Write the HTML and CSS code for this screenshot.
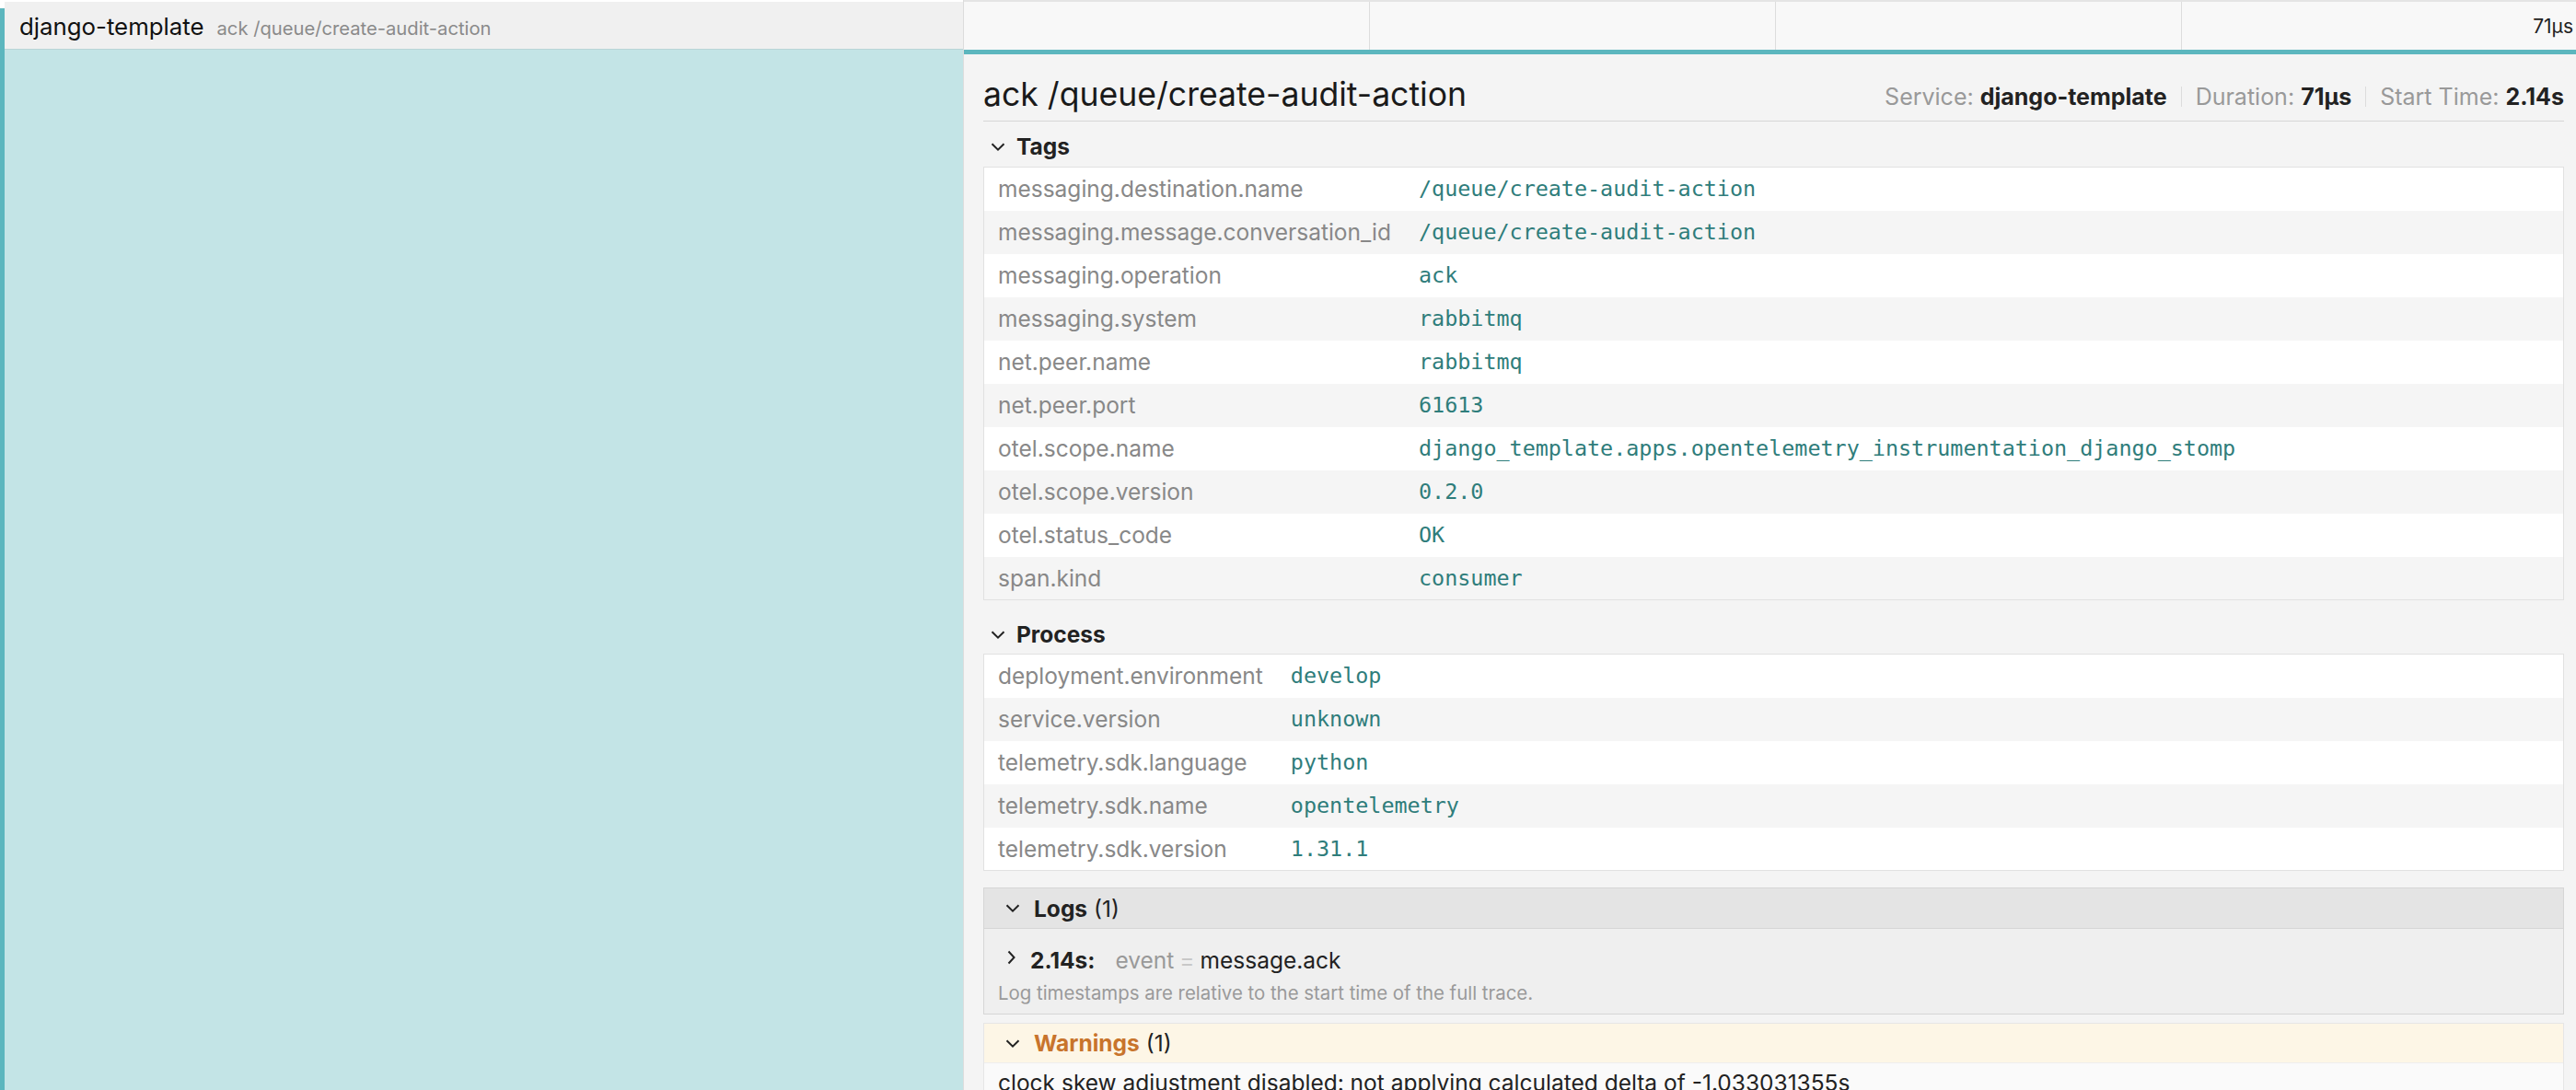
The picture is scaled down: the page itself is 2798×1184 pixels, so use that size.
FILE: index.html
```html
<!DOCTYPE html>
<html lang="en">
<head>
<meta charset="utf-8">
<title>ack /queue/create-audit-action</title>
<link rel="stylesheet" href="styles.css">
</head>
<body>
<div class="page">
  <div class="left">
    <div class="strip"></div>
    <div class="left-main">
      <div class="left-head">
        <span class="svc">django-template</span>
        <span class="op">ack /queue/create-audit-action</span>
      </div>
      <div class="left-body"></div>
    </div>
  </div>
  <div class="right">
    <div class="ticks">
      <div class="tick"></div>
      <div class="tick"></div>
      <div class="tick"></div>
      <div class="tick last"><span>71µs</span></div>
    </div>
    <div class="bar"></div>
    <div class="detail">
      <div class="title-row">
        <h1 class="title">ack /queue/create-audit-action</h1>
        <div class="meta">
          <span>Service: <b>django-template</b></span>
          <span class="sep"></span>
          <span>Duration: <b>71µs</b></span>
          <span class="sep"></span>
          <span>Start Time: <b>2.14s</b></span>
        </div>
      </div>

      <div class="sec-head">
        <svg class="chev" viewBox="0 0 16 9"><path d="M1.5 1.2 L8 7.6 L14.5 1.2"/></svg>
        <span>Tags</span>
      </div>
      <table class="kv">
        <tr><td class="k">messaging.destination.name</td><td class="v">/queue/create-audit-action</td></tr>
        <tr><td class="k">messaging.message.conversation_id</td><td class="v">/queue/create-audit-action</td></tr>
        <tr><td class="k">messaging.operation</td><td class="v">ack</td></tr>
        <tr><td class="k">messaging.system</td><td class="v">rabbitmq</td></tr>
        <tr><td class="k">net.peer.name</td><td class="v">rabbitmq</td></tr>
        <tr><td class="k">net.peer.port</td><td class="v">61613</td></tr>
        <tr><td class="k">otel.scope.name</td><td class="v">django_template.apps.opentelemetry_instrumentation_django_stomp</td></tr>
        <tr><td class="k">otel.scope.version</td><td class="v">0.2.0</td></tr>
        <tr><td class="k">otel.status_code</td><td class="v">OK</td></tr>
        <tr><td class="k">span.kind</td><td class="v">consumer</td></tr>
      </table>

      <div class="sec-head process">
        <svg class="chev" viewBox="0 0 16 9"><path d="M1.5 1.2 L8 7.6 L14.5 1.2"/></svg>
        <span>Process</span>
      </div>
      <table class="kv">
        <tr><td class="k">deployment.environment</td><td class="v">develop</td></tr>
        <tr><td class="k">service.version</td><td class="v">unknown</td></tr>
        <tr><td class="k">telemetry.sdk.language</td><td class="v">python</td></tr>
        <tr><td class="k">telemetry.sdk.name</td><td class="v">opentelemetry</td></tr>
        <tr><td class="k">telemetry.sdk.version</td><td class="v">1.31.1</td></tr>
      </table>

      <div class="box logs">
        <div class="box-head">
          <svg class="chev" viewBox="0 0 16 9"><path d="M1.5 1.2 L8 7.6 L14.5 1.2"/></svg>
          <b>Logs</b><span class="count">(1)</span>
        </div>
        <div class="log-body">
          <div class="log-row">
            <svg class="chev-r" viewBox="0 0 9 16"><path d="M1.5 1.5 L7.5 8 L1.5 14.5"/></svg>
            <span class="ts">2.14s:</span>
            <span class="ek">event</span><span class="eq">=</span><span class="ev">message.ack</span>
          </div>
          <div class="note">Log timestamps are relative to the start time of the full trace.</div>
        </div>
      </div>

      <div class="box warn">
        <div class="box-head">
          <svg class="chev" viewBox="0 0 16 9"><path d="M1.5 1.2 L8 7.6 L14.5 1.2"/></svg>
          <b class="warn-title">Warnings</b><span class="count">(1)</span>
        </div>
        <div class="warn-body">clock skew adjustment disabled: not applying calculated delta of -1.033031355s</div>
      </div>
    </div>
  </div>
</div>
</body>
</html>
```

FILE: styles.css
```css
* { box-sizing: border-box; margin: 0; padding: 0; }
html, body { width: 2798px; height: 1184px; overflow: hidden; background: #fff; }
body { font-family: Inter, "Liberation Sans", sans-serif; color: #222; }

.page { display: flex; height: 1184px; }

/* left span-name column */
.left { width: 1046px; flex: none; display: flex; background: #fff; }
.strip { width: 5px; flex: none; margin-top: 9px; background: #5cb6be; }
.left-main { flex: 1; display: flex; flex-direction: column; }
.left-head {
  margin-top: 2px; height: 52px; flex: none;
  display: flex; align-items: baseline; padding: 12px 0 0 16px;
  background: #f0f0f0; border-bottom: 1px solid #b9d5d7;
}
.svc { font-size: 25.8px; line-height: 30px; color: #111; }
.op { font-size: 20.2px; color: #8a8a8a; margin-left: 14px; }
.left-body { flex: 1; background: #c3e4e6; }

/* right detail column */
.right { flex: 1; display: flex; flex-direction: column; background: #f4f4f4; border-left: 1px solid #dcdcdc; min-width: 0; }
.ticks {
  height: 54px; flex: none; display: grid; grid-template-columns: 440px 441px 441px 1fr;
  background: #f8f8f8; border-top: 2px solid #e4e4e4;
}
.tick { border-left: 1px solid #dddddd; }
.tick:first-child { border-left: none; }
.tick.last { display: flex; align-items: center; justify-content: flex-end; padding-right: 3px; font-size: 21px; color: #222; }
.bar { height: 5px; flex: none; background: #5cb6be; }

.detail { flex: 1; padding: 0 13px 0 21px; }

.title-row {
  display: flex; align-items: center; justify-content: space-between;
  padding: 22px 0 6px; border-bottom: 1px solid #d6d6d6;
}
.title { font-size: 35.6px; font-weight: 400; line-height: 44px; color: #1a1a1a; }
.meta { display: flex; align-items: center; font-size: 25px; line-height: 30px; color: #999; margin-top: 4px; }
.meta b { color: #222; font-weight: 700; }
.sep { width: 1px; height: 22px; background: #dcdcdc; margin: 0 15px; }

.sec-head {
  display: flex; align-items: center;
  padding: 12px 0 7px 8px; line-height: 30px;
  font-size: 24.5px; font-weight: 700; color: #222;
}
.sec-head.process { padding-top: 22px; padding-bottom: 6px; }
.chev { width: 16px; height: 9px; flex: none; margin-right: 12px; fill: none; stroke: #222; stroke-width: 2; }

.kv { width: 100%; border-collapse: collapse; border: 1px solid #e1e1e1; background: #fff; }
.kv td { height: 47px; padding: 0 15px; white-space: nowrap; vertical-align: middle; }
.kv tr:nth-child(even) { background: #f5f5f5; }
.k { width: 1px; font-size: 24.5px; color: #888; }
.v { font-family: "DejaVu Sans Mono", "Liberation Mono", monospace; font-size: 23.4px; color: #2f7d7b; }

.box { margin-top: 18px; border: 1px solid #d6d6d6; background: #efefef; }
.box-head {
  height: 44px; display: flex; align-items: center; padding-left: 23px;
  background: #e4e4e4; border-bottom: 1px solid #d6d6d6;
  font-size: 24.5px; line-height: 30px; color: #222;
}
.box-head .chev { margin-right: 15px; }
.box-head b { font-weight: 700; }
.count { margin-left: 7px; }

.log-body { padding: 19px 0 8px 15px; }
.log-row { display: flex; align-items: center; padding-left: 10px; font-size: 24.5px; line-height: 30px; }
.chev-r { width: 9px; height: 16px; flex: none; margin-right: 16px; margin-top: -6px; fill: none; stroke: #222; stroke-width: 2; }
.ts { font-weight: 700; color: #222; margin-right: 22px; }
.ek { color: #999; }
.eq { color: #c8c8c8; margin: 0 6px; }
.ev { color: #222; }
.note { margin-top: 7px; font-size: 20.4px; line-height: 28px; color: #9a9a9a; }

.warn { margin-top: 9px; border-color: #e6e6e6; background: #fafafa; }
.warn .box-head { height: 43px; background: #fdf6e6; border-bottom: 1px solid #eeeeee; }
.warn-title { color: #c8742c; }
.warn-body { padding: 6px 15px; font-size: 24.5px; line-height: 30px; color: #222; }
```
